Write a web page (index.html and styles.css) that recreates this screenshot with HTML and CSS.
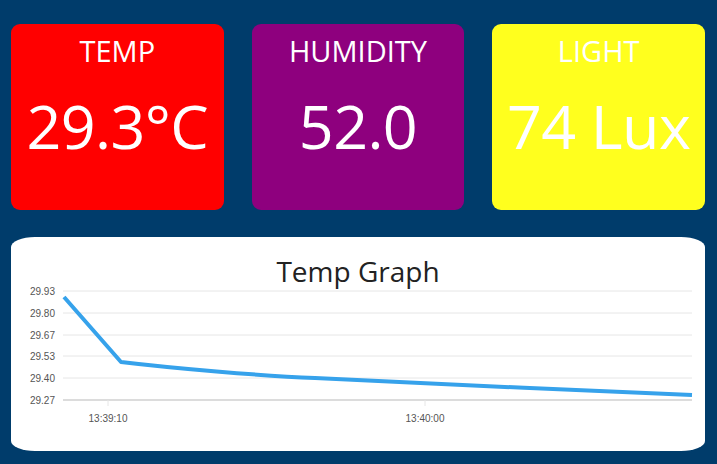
FILE: index.html
```html
<!DOCTYPE html>
<html>
<head>
<meta charset="utf-8">
<link rel="stylesheet" href="styles.css">
</head>
<body>
<div class="cards">
  <div class="card temp"><div class="label">TEMP</div><div class="value">29.3°C</div></div>
  <div class="card hum"><div class="label">HUMIDITY</div><div class="value">52.0</div></div>
  <div class="card light"><div class="label">LIGHT</div><div class="value">74 Lux</div></div>
</div>
<div class="chart-card">
  <div class="chart-title">Temp Graph</div>
  <svg class="chart" width="694" height="166" viewBox="0 0 694 166">
    <g class="grid">
      <line x1="52" y1="6" x2="681" y2="6"/>
      <line x1="52" y1="28" x2="681" y2="28"/>
      <line x1="52" y1="50" x2="681" y2="50"/>
      <line x1="52" y1="71" x2="681" y2="71"/>
      <line x1="52" y1="93" x2="681" y2="93"/>
      <line class="axis" x1="52" y1="115" x2="681" y2="115"/>
      <line x1="97" y1="115" x2="97" y2="121"/>
      <line x1="414" y1="115" x2="414" y2="121"/>
    </g>
    <g class="ylabels">
      <text x="44" y="9.5">29.93</text>
      <text x="44" y="31.5">29.80</text>
      <text x="44" y="53.5">29.67</text>
      <text x="44" y="74.5">29.53</text>
      <text x="44" y="96.5">29.40</text>
      <text x="44" y="118.5">29.27</text>
    </g>
    <g class="xlabels">
      <text x="97" y="137">13:39:10</text>
      <text x="414" y="137">13:40:00</text>
    </g>
    <path class="series" d="M53 12 L110 77 C160 83 250 91 304 93 C420 99 560 105 681 110"/>
  </svg>
</div>
</body>
</html>
```
FILE: styles.css
```css
html, body {
  margin: 0;
  background: #003c6b;
}
body {
  padding: 24px 12px 0 11px;
  font-family: "Open Sans", "Noto Sans", sans-serif;
}
.cards {
  display: grid;
  grid-template-columns: repeat(3, 1fr);
  column-gap: 28px;
}
.card {
  height: 186px;
  border-radius: 9px;
  color: #fff;
  text-align: center;
  display: flex;
  flex-direction: column;
  align-items: center;
}
.temp { background: #ff0000; }
.hum { background: #8e007e; }
.light { background: #ffff1e; }
.label {
  font-size: 29px;
  line-height: 32px;
  margin-top: 11px;
}
.value {
  font-size: 61px;
  line-height: 70px;
  margin-top: 24px;
  letter-spacing: -0.6px;
}
.chart-card {
  margin-top: 27px;
  width: 694px;
  height: 214px;
  background: #fff;
  border-radius: 24px / 10px;
  display: flex;
  flex-direction: column;
  align-items: center;
}
.chart-title {
  height: 48px;
  font-size: 28px;
  line-height: 32px;
  padding-top: 18px;
  box-sizing: border-box;
  color: #222;
}
.chart {
  display: block;
}
.grid line {
  stroke: #e6e6e6;
  stroke-width: 1;
}
.grid line.axis {
  stroke: #dcdcdc;
  stroke-width: 2;
}
.ylabels text {
  font-family: "Liberation Sans", Arial, sans-serif;
  font-size: 10px;
  fill: #555;
  text-anchor: end;
}
.xlabels text {
  font-family: "Liberation Sans", Arial, sans-serif;
  font-size: 10px;
  fill: #555;
  text-anchor: middle;
}
.series {
  fill: none;
  stroke: #36a2eb;
  stroke-width: 4;
  stroke-linejoin: round;
}
```
